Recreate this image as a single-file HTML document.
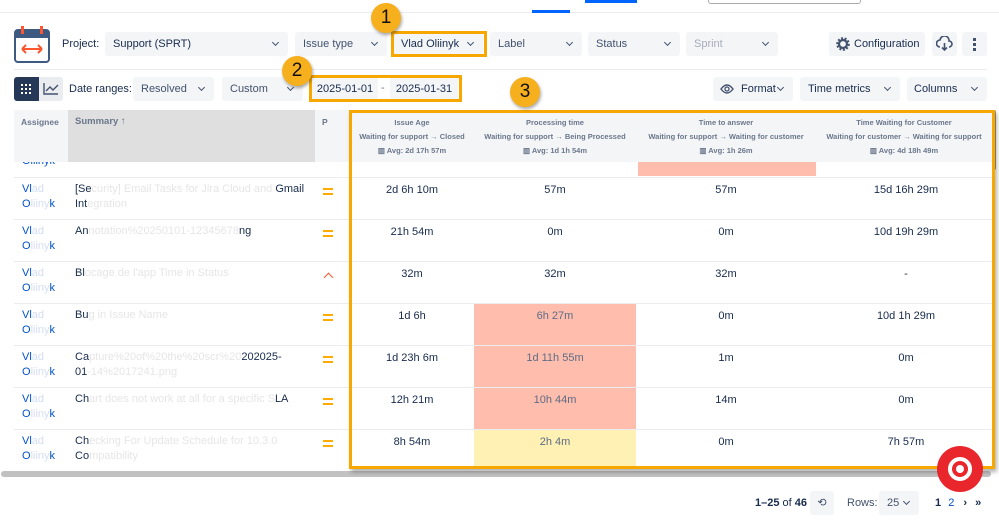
<!DOCTYPE html>
<html><head><meta charset="utf-8"><style>
*{box-sizing:border-box;margin:0;padding:0}
body{width:999px;height:525px;overflow:hidden;background:#fff;font-family:"Liberation Sans",sans-serif;color:#172b4d;position:relative;font-size:11px}
.a{position:absolute}
.sel{position:absolute;background:#f4f5f7;border-radius:3px;height:24px;line-height:24px;padding-left:8px;font-size:11px;color:#42526e;white-space:nowrap}
.sel:after{content:"";position:absolute;right:10px;top:8px;width:4px;height:4px;border-right:1.5px solid #42526e;border-bottom:1.5px solid #42526e;transform:rotate(45deg)}
.nc:after{display:none}
.ob{position:absolute;border:3px solid #f6a800}
.circ{position:absolute;width:30px;height:30px;border-radius:50%;background:#f6b01e;color:#111;font-size:19px;text-align:center;line-height:30px;box-shadow:1px 2px 3px rgba(0,0,0,.35)}
.hl{position:absolute;height:1px;background:#ebecf0}
.c{position:absolute;text-align:center;font-size:11px;color:#172b4d}
.h{position:absolute;text-align:center;font-size:7.5px;color:#6b778c;font-weight:bold;white-space:nowrap;overflow:hidden}
.nm{position:absolute;color:#0052cc;font-size:11px;line-height:15px;width:40px;overflow:hidden;white-space:nowrap}
.sm{position:absolute;font-size:11px;line-height:15px;color:#172b4d;white-space:nowrap}
.bl{color:#e6e6e6}
.nb{color:#d4def3}
.pr{position:absolute;left:323px;width:10px;height:7px;border-top:2px solid #ffab00;border-bottom:2px solid #ffab00}
</style></head><body>
<div class="a" style="left:0;top:12px;width:999px;height:1px;background:#ebecf0"></div>
<div class="a" style="left:532px;top:10px;width:38px;height:3px;background:#0065ff"></div>
<div class="a" style="left:585px;top:0;width:52px;height:3px;background:#0065ff"></div>
<div class="a" style="left:708px;top:-2px;width:153px;height:6px;border:1px solid #aaa;border-radius:4px"></div>
<svg class="a" style="left:14px;top:25px" width="36" height="38" viewBox="0 0 36 38"><rect x="1" y="5" width="34" height="32" rx="3" fill="#fff" stroke="#3d5a80" stroke-width="2"/><rect x="1" y="5" width="34" height="8" fill="#3d5a80"/><rect x="7" y="1" width="3" height="8" fill="#ff5630"/><rect x="26" y="1" width="3" height="8" fill="#ff5630"/><path d="M8 24h20M8 24l4-4M8 24l4 4M28 24l-4-4M28 24l-4 4" stroke="#ff5630" stroke-width="2" fill="none"/></svg>
<div class="a" style="left:62px;top:38px;font-size:11px;color:#172b4d">Project:</div>
<div class="sel" style="left:105px;top:32px;width:183px;color:#172b4d">Support (SPRT)</div>
<div class="sel" style="left:295px;top:32px;width:92px">Issue type</div>
<div class="sel" style="left:393px;top:32px;width:90px;color:#172b4d">Vlad Oliinyk</div>
<div class="sel" style="left:490px;top:32px;width:92px">Label</div>
<div class="sel" style="left:588px;top:32px;width:92px">Status</div>
<div class="sel" style="left:686px;top:32px;width:92px;color:#a5adba">Sprint</div>
<div class="sel nc" style="left:829px;top:32px;width:96px;padding-left:25px;color:#172b4d">Configuration</div>
<svg class="a" style="left:836px;top:37px" width="14" height="14" viewBox="0 0 14 14"><circle cx="7" cy="7" r="4" fill="none" stroke="#42526e" stroke-width="2.2"/><circle cx="7" cy="7" r="5.8" fill="none" stroke="#42526e" stroke-width="2" stroke-dasharray="2 1.6"/></svg>
<div class="sel nc" style="left:932px;top:32px;width:25px;padding:0"></div>
<svg class="a" style="left:936px;top:36px" width="17" height="16" viewBox="0 0 17 16"><path d="M4 11a3.5 3.5 0 0 1 0-7 4.5 4.5 0 0 1 9 1 3 3 0 0 1 0 6M8.5 7v7M6 11.5l2.5 2.5 2.5-2.5" stroke="#42526e" stroke-width="1.6" fill="none"/></svg>
<div class="sel nc" style="left:962px;top:32px;width:25px;padding:0"></div>
<div class="a" style="left:973px;top:38px;width:3px;height:3px;background:#42526e;box-shadow:0 5px 0 #42526e,0 10px 0 #42526e"></div>
<div class="a" style="left:14px;top:69px;width:973px;height:1px;background:#ebecf0"></div>
<div class="a" style="left:14px;top:77px;width:25px;height:24px;background:#253858;border-radius:3px 0 0 3px"></div>
<div class="a" style="left:21px;top:84px;width:2px;height:2px;background:#fff;box-shadow:4px 0 #fff,8px 0 #fff,0 4px #fff,4px 4px #fff,8px 4px #fff,0 8px #fff,4px 8px #fff,8px 8px #fff"></div>
<div class="a" style="left:39px;top:77px;width:24px;height:24px;background:#ebecf0;border-radius:0 3px 3px 0"></div>
<svg class="a" style="left:43px;top:82px" width="16" height="13"><path d="M1 1v11h14M3 9l4-4 3 3 5-5" stroke="#42526e" stroke-width="1.4" fill="none"/></svg>
<div class="a" style="left:69px;top:83px;font-size:11px">Date ranges:</div>
<div class="sel" style="left:133px;top:77px;width:81px">Resolved</div>
<div class="sel" style="left:222px;top:77px;width:81px">Custom</div>
<div class="a" style="left:312px;top:78px;width:66px;height:22px;line-height:22px;text-align:center;background:#f4f5f7;font-size:11px">2025-01-01</div>
<div class="a" style="left:381px;top:82px;color:#6b778c">-</div>
<div class="a" style="left:390px;top:78px;width:68px;height:22px;line-height:22px;text-align:center;background:#f4f5f7;font-size:11px">2025-01-31</div>
<div class="sel" style="left:713px;top:77px;width:80px;padding-left:28px;color:#172b4d">Format</div>
<svg class="a" style="left:720px;top:84px" width="14" height="10"><path d="M1 5q6-8 12 0q-6 8-12 0z" stroke="#42526e" stroke-width="1.4" fill="none"/><circle cx="7" cy="5" r="2" fill="none" stroke="#42526e" stroke-width="1.3"/></svg>
<div class="sel" style="left:800px;top:77px;width:100px;color:#172b4d">Time metrics</div>
<div class="sel" style="left:907px;top:77px;width:80px;padding-left:7px;color:#172b4d">Columns</div>
<div class="a" style="left:14px;top:110px;width:978px;height:52px;background:#f4f5f7"></div>
<div class="a" style="left:68px;top:110px;width:247px;height:52px;background:#dfdfdf"></div>
<div class="a" style="left:21px;top:117px;font-size:8.5px;font-weight:bold;color:#6b778c">Assignee</div>
<div class="a" style="left:75px;top:116px;font-size:9.5px;font-weight:bold;color:#6b778c">Summary ↑</div>
<div class="a" style="left:322px;top:117px;font-size:8.5px;font-weight:bold;color:#6b778c">P</div>
<div class="h" style="left:350px;top:116px;width:124px;line-height:14px">Issue Age<br>Waiting for support → Closed<br>▥ Avg: 2d 17h 57m</div>
<div class="h" style="left:474px;top:116px;width:162px;line-height:14px">Processing time<br>Waiting for support → Being Processed<br>▥ Avg: 1d 1h 54m</div>
<div class="h" style="left:636px;top:116px;width:180px;line-height:14px">Time to answer<br>Waiting for support → Waiting for customer<br>▥ Avg: 1h 26m</div>
<div class="h" style="left:816px;top:116px;width:176px;line-height:14px">Time Waiting for Customer<br>Waiting for customer → Waiting for support<br>▥ Avg: 4d 18h 49m</div>
<div class="a" style="left:14px;top:162px;width:978px;height:15px;overflow:hidden"><div class="nm" style="left:8px;top:-8px">Oliinyk</div><div class="a" style="left:624px;top:0;width:178px;height:14px;background:#ffbdad"></div></div>
<div class="a" style="left:474px;top:303px;width:162px;height:126px;background:#ffbdad"></div>
<div class="a" style="left:474px;top:429px;width:162px;height:40px;background:#fff0b3"></div>
<div class="hl" style="left:14px;top:177px;width:978px"></div>
<div class="hl" style="left:14px;top:219px;width:978px"></div>
<div class="hl" style="left:14px;top:261px;width:978px"></div>
<div class="hl" style="left:14px;top:303px;width:978px"></div>
<div class="hl" style="left:14px;top:345px;width:978px"></div>
<div class="hl" style="left:14px;top:387px;width:978px"></div>
<div class="hl" style="left:14px;top:429px;width:978px"></div>
<div class="nm" style="left:22px;top:182px">Vl<span class="nb">ad</span><br>O<span class="nb">liiny</span>k</div>
<div class="sm" style="left:75px;top:182px">[Se<span class="bl">curity] Email Tasks for Jira Cloud and</span> Gmail<br>Int<span class="bl">egration</span></div>
<div class="nm" style="left:22px;top:224px">Vl<span class="nb">ad</span><br>O<span class="nb">liiny</span>k</div>
<div class="sm" style="left:75px;top:224px">An<span class="bl">notation%20250101-12345678</span>ng</div>
<div class="nm" style="left:22px;top:266px">Vl<span class="nb">ad</span><br>O<span class="nb">liiny</span>k</div>
<div class="sm" style="left:75px;top:266px">Bl<span class="bl">ocage de l'app Time in Status</span></div>
<div class="nm" style="left:22px;top:308px">Vl<span class="nb">ad</span><br>O<span class="nb">liiny</span>k</div>
<div class="sm" style="left:75px;top:308px">Bu<span class="bl">g in Issue Name</span></div>
<div class="nm" style="left:22px;top:350px">Vl<span class="nb">ad</span><br>O<span class="nb">liiny</span>k</div>
<div class="sm" style="left:75px;top:350px">Ca<span class="bl">pture%20of%20the%20scr%20</span>202025-<br>01<span class="bl">-14%2017241.png</span></div>
<div class="nm" style="left:22px;top:392px">Vl<span class="nb">ad</span><br>O<span class="nb">liiny</span>k</div>
<div class="sm" style="left:75px;top:392px">Ch<span class="bl">art does not work at all for a specific S</span>LA</div>
<div class="nm" style="left:22px;top:434px">Vl<span class="nb">ad</span><br>O<span class="nb">liiny</span>k</div>
<div class="sm" style="left:75px;top:434px">Ch<span class="bl">ecking For Update Schedule for 10.3.0</span><br>Co<span class="bl">mpatibility</span></div>
<div class="pr" style="top:188px"></div><div class="pr" style="top:230px"></div>
<div class="a" style="left:325px;top:274px;width:7px;height:7px;border-left:1.5px solid #ff5630;border-top:1.5px solid #ff5630;transform:rotate(45deg)"></div>
<div class="pr" style="top:314px"></div><div class="pr" style="top:356px"></div><div class="pr" style="top:398px"></div><div class="pr" style="top:440px"></div>
<div class="c" style="left:350px;top:184px;width:124px">2d 6h 10m</div><div class="c" style="left:474px;top:184px;width:162px">57m</div><div class="c" style="left:636px;top:184px;width:180px">57m</div><div class="c" style="left:816px;top:184px;width:180px">15d 16h 29m</div>
<div class="c" style="left:350px;top:226px;width:124px">21h 54m</div><div class="c" style="left:474px;top:226px;width:162px">0m</div><div class="c" style="left:636px;top:226px;width:180px">0m</div><div class="c" style="left:816px;top:226px;width:180px">10d 19h 29m</div>
<div class="c" style="left:350px;top:268px;width:124px">32m</div><div class="c" style="left:474px;top:268px;width:162px">32m</div><div class="c" style="left:636px;top:268px;width:180px">32m</div><div class="c" style="left:816px;top:268px;width:180px">-</div>
<div class="c" style="left:350px;top:310px;width:124px">1d 6h</div><div class="c" style="left:474px;top:310px;width:162px;color:#5e6c84">6h 27m</div><div class="c" style="left:636px;top:310px;width:180px">0m</div><div class="c" style="left:816px;top:310px;width:180px">10d 1h 29m</div>
<div class="c" style="left:350px;top:352px;width:124px">1d 23h 6m</div><div class="c" style="left:474px;top:352px;width:162px;color:#5e6c84">1d 11h 55m</div><div class="c" style="left:636px;top:352px;width:180px">1m</div><div class="c" style="left:816px;top:352px;width:180px">0m</div>
<div class="c" style="left:350px;top:394px;width:124px">12h 21m</div><div class="c" style="left:474px;top:394px;width:162px;color:#5e6c84">10h 44m</div><div class="c" style="left:636px;top:394px;width:180px">14m</div><div class="c" style="left:816px;top:394px;width:180px">0m</div>
<div class="c" style="left:350px;top:436px;width:124px">8h 54m</div><div class="c" style="left:474px;top:436px;width:162px;color:#5e6c84">2h 4m</div><div class="c" style="left:636px;top:436px;width:180px">0m</div><div class="c" style="left:816px;top:436px;width:180px">7h 57m</div>
<div class="a" style="left:992px;top:110px;width:4px;height:60px;background:#999;border-radius:2px"></div>
<div class="a" style="left:1px;top:471px;width:990px;height:6px;background:#c1c1c1;border-radius:3px"></div>
<div class="ob" style="left:391px;top:31px;width:96px;height:26px"></div>
<div class="ob" style="left:309px;top:75px;width:153px;height:27px"></div>
<div class="ob" style="left:349px;top:110px;width:646px;height:359px;box-shadow:2px 3px 4px rgba(0,0,0,.3)"></div>
<div class="circ" style="left:371px;top:3px">1</div>
<div class="circ" style="left:282px;top:56px">2</div>
<div class="circ" style="left:510px;top:77px">3</div>
<div class="a" style="left:937px;top:446px;width:46px;height:46px;border-radius:50%;background:#e8262b"></div>
<div class="a" style="left:948px;top:457px;width:24px;height:24px;border-radius:50%;border:4px solid #fff"></div>
<div class="a" style="left:956px;top:465px;width:8px;height:8px;border-radius:50%;background:#fff"></div>
<div class="a" style="left:755px;top:497px;font-size:11px;white-space:nowrap"><b>1–25</b> of <b>46</b></div>
<div class="a" style="left:810px;top:491px;width:24px;height:24px;background:#f4f5f7;border-radius:3px;text-align:center;line-height:24px;color:#42526e">⟲</div>
<div class="a" style="left:847px;top:497px;font-size:11px;color:#42526e">Rows:</div>
<div class="sel" style="left:879px;top:491px;width:40px">25</div>
<div class="a" style="left:935px;top:497px;font-size:11px;white-space:nowrap"><b>1</b> <span style="color:#0052cc;margin-left:4px">2</span> <b style="margin-left:6px">›</b> <b style="margin-left:5px">»</b></div>
</body></html>
